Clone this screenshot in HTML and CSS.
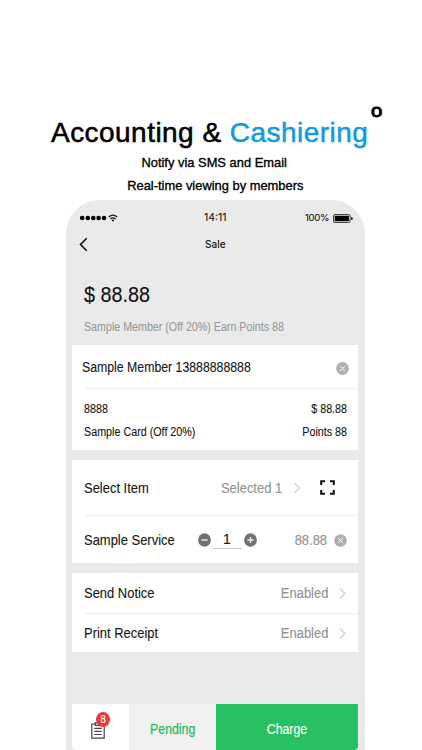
FILE: index.html
```html
<!DOCTYPE html>
<html lang="en">
<head>
<meta charset="utf-8">
<title>Accounting &amp; Cashiering</title>
<link rel="stylesheet" href="styles.css">
</head>
<body>
<header class="hero">
  <h1 class="title">Accounting &amp; <span class="accent">Cashiering</span><span class="mark">o</span></h1>
  <p class="sub"><span class="fit">Notify via SMS and Email</span></p>
  <p class="sub second"><span class="fit">Real-time viewing by members</span></p>
</header>
<main class="phone">
  <div class="status">
    <svg class="signal" width="38" height="10" viewBox="0 0 38 10"><g><circle cx="2.2" cy="5" r="2.3"/><circle cx="7.8" cy="5" r="2.3"/><circle cx="13.3" cy="5" r="2.3"/><circle cx="18.6" cy="5" r="2.3"/><circle cx="24" cy="5" r="2.3"/></g><g fill="none" stroke="#161616" stroke-width="1.1"><path d="M28.8 4Q33 .2 37.2 4M30.4 6Q33 3.7 35.6 6"/></g><path d="M31.6 7.1Q33 6 34.4 7.1L33 8.8Z"/></svg>
    <span class="time">14:11</span>
    <span class="charge-level">100%</span>
    <svg class="battery" width="20" height="9" viewBox="0 0 20 9"><rect x=".5" y=".5" width="16.6" height="8" rx="1.5" fill="none" stroke="#333" stroke-width=".9"/><rect x="1.7" y="1.7" width="14.2" height="5.6" rx=".4"/><path d="M18.2 3Q19.7 3 19.7 4.5T18.2 6Z"/></svg>
  </div>
  <nav class="nav">
    <svg class="back" width="9" height="15" viewBox="0 0 9 15"><path d="M7.7 1.2L1.5 7.5L7.7 13.8" fill="none" stroke="#111" stroke-width="1.6"/></svg>
    <span class="page">Sale</span>
  </nav>
  <section class="summary">
    <div class="amount">$ 88.88</div>
    <div class="info">Sample Member (Off 20%) Earn Points 88</div>
  </section>
  <section class="card member">
    <div class="row member-head">
      <span class="l name">Sample Member 13888888888</span>
      <svg class="clear" width="13" height="13" viewBox="0 0 13 13"><circle cx="6.5" cy="6.5" r="6.4" fill="#b0b0b0"/><path d="M4.1 4.1l4.8 4.8M8.9 4.1L4.1 8.9" stroke="#fff" stroke-width=".9"/></svg>
    </div>
    <div class="row small first"><span class="l">8888</span><span class="r">$ 88.88</span></div>
    <div class="row small"><span class="l">Sample Card (Off 20%)</span><span class="r">Points 88</span></div>
  </section>
  <section class="card items">
    <div class="row select">
      <span class="l">Select Item</span>
      <span class="r muted">Selected 1</span>
      <svg class="chev" width="8" height="12" viewBox="0 0 8 12"><path d="M1.2 .8L6.5 6L1.2 11.2" fill="none" stroke="#aaa" stroke-width="1"/></svg>
      <svg class="scan" width="15" height="15" viewBox="0 0 15 15"><path d="M1.2 5V1.2H5M10 1.2H13.8V5M13.8 10V13.8H10M5 13.8H1.2V10" fill="none" stroke="#111" stroke-width="2.1"/></svg>
    </div>
    <div class="row service">
      <span class="l">Sample Service</span>
      <svg class="step" width="13" height="14" viewBox="0 0 13 14"><ellipse cx="6.5" cy="7" rx="6.4" ry="6.8" fill="#717171"/><path d="M3.4 7h6.2" stroke="#eee" stroke-width="1.4"/></svg>
      <span class="qty">1</span>
      <svg class="step" width="13" height="14" viewBox="0 0 13 14"><ellipse cx="6.5" cy="7" rx="6.4" ry="6.8" fill="#717171"/><path d="M3.4 7h6.2M6.5 3.9v6.2" stroke="#eee" stroke-width="1.4"/></svg>
      <span class="r muted">88.88</span>
      <svg class="remove" width="13" height="13" viewBox="0 0 13 13"><circle cx="6.5" cy="6.5" r="6.3" fill="#b0b0b0"/><path d="M4.2 4.2l4.6 4.6M8.8 4.2L4.2 8.8" stroke="#fff" stroke-width=".9"/></svg>
    </div>
  </section>
  <section class="card options">
    <div class="row option"><span class="l">Send Notice</span><span class="r muted">Enabled</span>
      <svg width="7" height="11" viewBox="0 0 7 11"><path d="M1 .6L5.8 5.5L1 10.4" fill="none" stroke="#aaa"/></svg></div>
    <div class="row option"><span class="l">Print Receipt</span><span class="r muted">Enabled</span>
      <svg width="7" height="11" viewBox="0 0 7 11"><path d="M1 .6L5.8 5.5L1 10.4" fill="none" stroke="#aaa"/></svg></div>
  </section>
  <footer class="actions">
    <div class="orders">
      <svg width="14" height="17" viewBox="0 0 14 17"><g fill="none" stroke="#444" stroke-width="1.2"><path d="M4 2H.8V16.2H13.2V2H10M4.2 3.3V.9H9.8V3.3Z"/><path d="M3.3 6.3H10.7M3.3 9.4H10.7M3.3 12.5H10.7"/></g></svg>
      <span class="badge">8</span>
    </div>
    <div class="pending"><span>Pending</span></div>
    <div class="charge"><span>Charge</span></div>
  </footer>
</main>
</body>
</html>
```
FILE: styles.css
```css
* { box-sizing: border-box; }
body { margin: 0; width: 422px; height: 750px; overflow: hidden; background: #fff; color: #181818; font: 14px/20px "Liberation Sans", Arial, sans-serif; }
svg { display: block; flex: none; }
.hero { height: 200px; padding-top: 115px; }
.title { position: relative; width: 320px; margin: 0 0 0 51px; font-size: 28px; line-height: 36px; font-weight: 400; letter-spacing: .46px; color: #000; white-space: nowrap; -webkit-text-stroke: .55px currentColor; }
.accent { color: #169bd9; }
.mark { position: absolute; left: 319.5px; top: -22.5px; font-size: 19px; letter-spacing: 0; -webkit-text-stroke: 1px #000; transform: scaleX(1.07); transform-origin: 0 50%; }
.sub { margin: 2px 0 0; padding-left: 6px; text-align: center; font-size: 13.5px; line-height: 20px; color: #000; -webkit-text-stroke: .35px #000; }
.sub.second { margin-top: 3px; padding-left: 9px; }
.fit { display: inline-block; transform: scaleX(.955); white-space: nowrap; }
.phone { width: 299px; height: 550px; margin-left: 66px; border-radius: 34px 34px 0 0; padding: 0 7px 0 6px; background: #e9e9e9; display: flex; flex-direction: column; -webkit-text-stroke: .12px currentColor; }
.status { height: 34px; padding: 2px 5px 0 8px; display: grid; grid-template-columns: 104px 64px 1fr 20px; align-items: center; font: 10px/14px Inter, sans-serif; }
.time { margin-left: 20px; font-size: 10.4px; }
.charge-level { padding-left: 67px; font-size: 9.6px; white-space: nowrap; letter-spacing: -.35px; }
.status { grid-template-columns: 104px 1fr auto 20px; }
.charge-level { padding: 0 4px 0 0; }
.nav { height: 20px; display: grid; grid-template-columns: 133px 1fr; align-items: center; font: 500 10px/14px Inter, sans-serif; -webkit-text-stroke: 0; }
.back { margin-left: 7px; }
.summary { height: 91px; padding: 27px 0 0 11.5px; }
.amount { font-size: 21.5px; line-height: 28px; transform: scaleX(.92); transform-origin: 0 50%; color: #111; }
.info { margin-top: 10px; font-size: 12px; line-height: 16px; transform: scaleX(.89); transform-origin: 0 50%; color: #999; white-space: nowrap; width: 250px; }
.card { background: #fff; padding-left: 11.5px; flex: none; }
.row { display: flex; align-items: center; }
.l { transform: scaleX(.925); transform-origin: 0 50%; white-space: nowrap; }
.r { margin-left: auto; transform: scaleX(.925); transform-origin: 100% 50%; white-space: nowrap; }
.muted { color: #929292; }
.member { height: 105px; }
.member-head { height: 44px; border-bottom: 1px solid #eee; justify-content: space-between; padding-right: 9px; }
.name { margin-left: -2px; transform: scaleX(.878); }
.clear { margin-top: 4px; }
.small { height: 23px; padding-right: 11px; font-size: 12px; }
.small.first { margin-top: 8px; }
.small .l, .small .r { transform: scaleX(.895); }
.items { height: 103px; margin-top: 10px; }
.select { height: 56px; border-bottom: 1px solid #eee; padding-right: 23px; }
.chev { margin-left: 11px; }
.scan { margin-left: 19px; }
.service { height: 48px; padding-right: 11px; }
.service .l { width: 114px; }
.qty { width: 30px; height: 18px; margin: 0 2px 0 1.5px; border-bottom: 1px solid #ccc; text-align: center; line-height: 17px; }
.remove { margin-left: 7px; }
.options { height: 79px; margin-top: 10px; }
.option { height: 38px; padding-right: 12px; }
.option:first-child { height: 41px; border-bottom: 1px solid #eee; }
.option svg { margin-left: 11px; }
.actions { height: 46px; margin-top: auto; flex: none; display: grid; grid-template-columns: 57px 87px 142px; border-radius: 0 0 4px 4px; overflow: hidden; }
.orders { position: relative; background: #fff; padding: 18px 0 0 19px; }
.badge { position: absolute; left: 24px; top: 8px; width: 14px; height: 15px; border-radius: 50%; background: #ed3833; color: #fff; font-size: 10px; line-height: 15px; text-align: center; }
.pending, .charge { display: flex; align-items: center; justify-content: center; padding-top: 4px; }
.pending { background: #f1f1f1; color: #24bd60; -webkit-text-stroke: .25px currentColor; }
.charge { background: #27c162; color: #fff; }
.pending span, .charge span { transform: scaleX(.88); }
```
